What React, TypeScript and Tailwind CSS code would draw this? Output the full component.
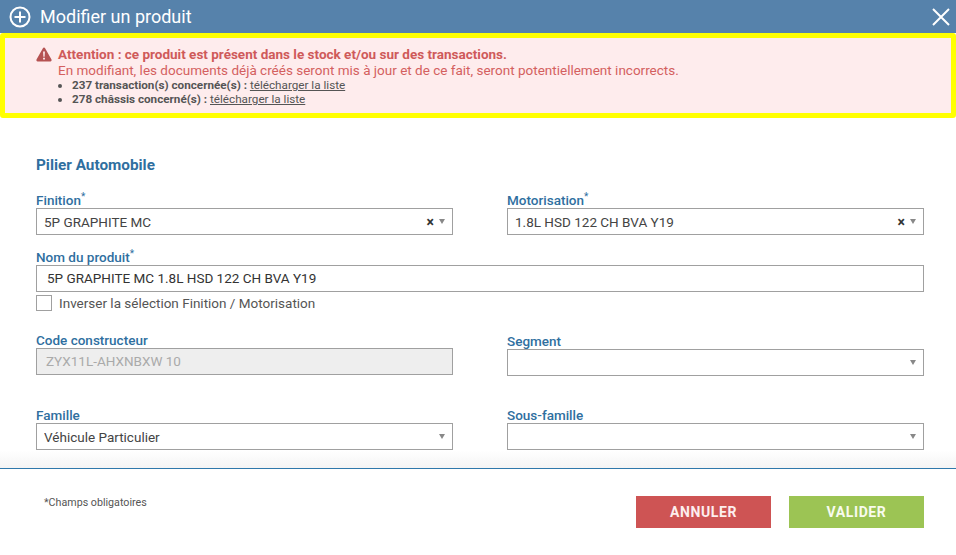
import React from "react";

function Label({ text, required }: { text: string; required?: boolean }) {
  return (
    <div className="h-4 text-[13.5px] leading-4 font-medium text-[#2f6f9f] whitespace-nowrap">
      {text}
      {required && <sup className="text-[10px] font-normal">*</sup>}
    </div>
  );
}

function Select({ value, clear }: { value?: string; clear?: boolean }) {
  return (
    <div className="h-[27px] border border-[#a0a0a0] bg-white flex items-center pl-[7px] pr-[7px] text-[13.5px] text-[#444]">
      <span className="flex-1 truncate pt-px">{value}</span>
      {clear && <span className="text-[14px] font-bold text-[#333] mr-[5px] leading-none">×</span>}
      <span className="w-0 h-0 border-x-[3.5px] border-x-transparent border-t-[5px] border-t-[#888]" />
    </div>
  );
}

export default function App() {
  return (
    <div className="w-[956px] h-[555px] bg-white overflow-hidden font-['Roboto',sans-serif] flex flex-col">
      {/* Header */}
      <header className="h-[33px] bg-[#5682ab] flex items-center justify-between pl-[9px] pr-[5px] text-white">
        <div className="flex items-center gap-[9px]">
          <svg width="22" height="22" viewBox="0 0 22 22" fill="none" stroke="white" strokeWidth="2">
            <circle cx="11" cy="11" r="9.5" />
            <path d="M11 5.5v11M5.5 11h11" />
          </svg>
          <span className="text-[18px] leading-none">Modifier un produit</span>
        </div>
        <svg width="20" height="20" viewBox="0 0 20 20" fill="none" stroke="white" strokeWidth="2">
          <path d="M2 2l16 16M18 2L2 18" />
        </svg>
      </header>

      {/* Alert */}
      <div className="h-[85px] shrink-0 border-[5px] border-[#ffff00] rounded-[3px] bg-[#feeced] pl-[31px] pt-[8px] flex gap-[6px]">
        <svg width="16" height="15" viewBox="0 0 16 15" className="mt-[1px] shrink-0">
          <path d="M8 .5c.5 0 .9.3 1.1.7l6.4 11.4c.4.8-.1 1.9-1.1 1.9H1.6c-1 0-1.5-1.1-1.1-1.9L6.9 1.2C7.1.8 7.5.5 8 .5z" fill="#b55252" />
          <path d="M7.1 4.5h1.8l-.3 5.3H7.4zM7.1 10.8h1.8v1.7H7.1z" fill="#feeced" />
        </svg>
        <div className="text-[#cf5a5a]">
          <p className="text-[13.5px] leading-4 font-bold whitespace-nowrap">Attention : ce produit est présent dans le stock et/ou sur des transactions.</p>
          <p className="text-[13.5px] leading-4 text-[#d4605f] whitespace-nowrap">En modifiant, les documents déjà créés seront mis à jour et de ce fait, seront potentiellement incorrects.</p>
          <ul className="text-[11.7px] leading-[14px] text-[#555] list-disc pl-[14px]">
            <li>
              <b className="font-bold">237 transaction(s) concernée(s) : </b>
              <a className="underline">télécharger la liste</a>
            </li>
            <li>
              <b className="font-bold">278 châssis concerné(s) : </b>
              <a className="underline">télécharger la liste</a>
            </li>
          </ul>
        </div>
      </div>

      {/* Form */}
      <main className="h-[350px] shrink-0 pl-9 pr-8 pt-[39px] flex flex-col bg-gradient-to-b from-white from-[95%] to-[#f4f4f4]">
        <h2 className="h-[16px] text-[15.3px] leading-4 font-bold text-[#2f6f9f]">Pilier Automobile</h2>

        <div className="grid grid-cols-2 gap-x-[54px] mt-[19px]">
          <div className="flex flex-col">
            <Label text="Finition" required />
            <Select value="5P GRAPHITE MC" clear />
          </div>
          <div className="flex flex-col">
            <Label text="Motorisation" required />
            <Select value="1.8L HSD 122 CH BVA Y19" clear />
          </div>
        </div>

        <div className="flex flex-col mt-[14px]">
          <Label text="Nom du produit" required />
          <div className="h-[27px] border border-[#a0a0a0] flex items-center pl-[10px] text-[13.5px] text-[#333]">
            5P GRAPHITE MC 1.8L HSD 122 CH BVA Y19
          </div>
        </div>
        <label className="flex items-center gap-[7px] mt-[2px] text-[13.5px] leading-4 text-[#555]">
          <span className="w-4 h-4 border border-[#a0a0a0] bg-white" />
          <span className="pt-px">Inverser la sélection Finition / Motorisation</span>
        </label>

        <div className="grid grid-cols-2 gap-x-[54px] mt-[21px]">
          <div className="flex flex-col">
            <Label text="Code constructeur" />
            <div className="h-[27px] border border-[#a0a0a0] bg-[#eeeeee] flex items-center pl-[9px] text-[13.5px] text-[#aaa]">
              ZYX11L-AHXNBXW 10
            </div>
          </div>
          <div className="flex flex-col pt-px">
            <Label text="Segment" />
            <Select />
          </div>
        </div>

        <div className="grid grid-cols-2 gap-x-[54px] mt-[31px]">
          <div className="flex flex-col">
            <Label text="Famille" />
            <Select value="Véhicule Particulier" />
          </div>
          <div className="flex flex-col">
            <Label text="Sous-famille" />
            <Select />
          </div>
        </div>
      </main>

      {/* Footer */}
      <footer className="flex-1 border-t border-[#2f78ab] flex justify-between pl-[44px] pr-8 pt-[27px]">
        <span className="text-[10.7px] leading-[14px] text-[#555]">*Champs obligatoires</span>
        <div className="flex gap-[18px]">
          <button className="w-[135px] h-[32px] bg-[#ce5454] text-[#fdeeee] text-[14px] font-bold tracking-[0.6px]">ANNULER</button>
          <button className="w-[135px] h-[32px] bg-[#9cc454] text-[#f8fbee] text-[14px] font-bold tracking-[0.6px]">VALIDER</button>
        </div>
      </footer>
    </div>
  );
}
